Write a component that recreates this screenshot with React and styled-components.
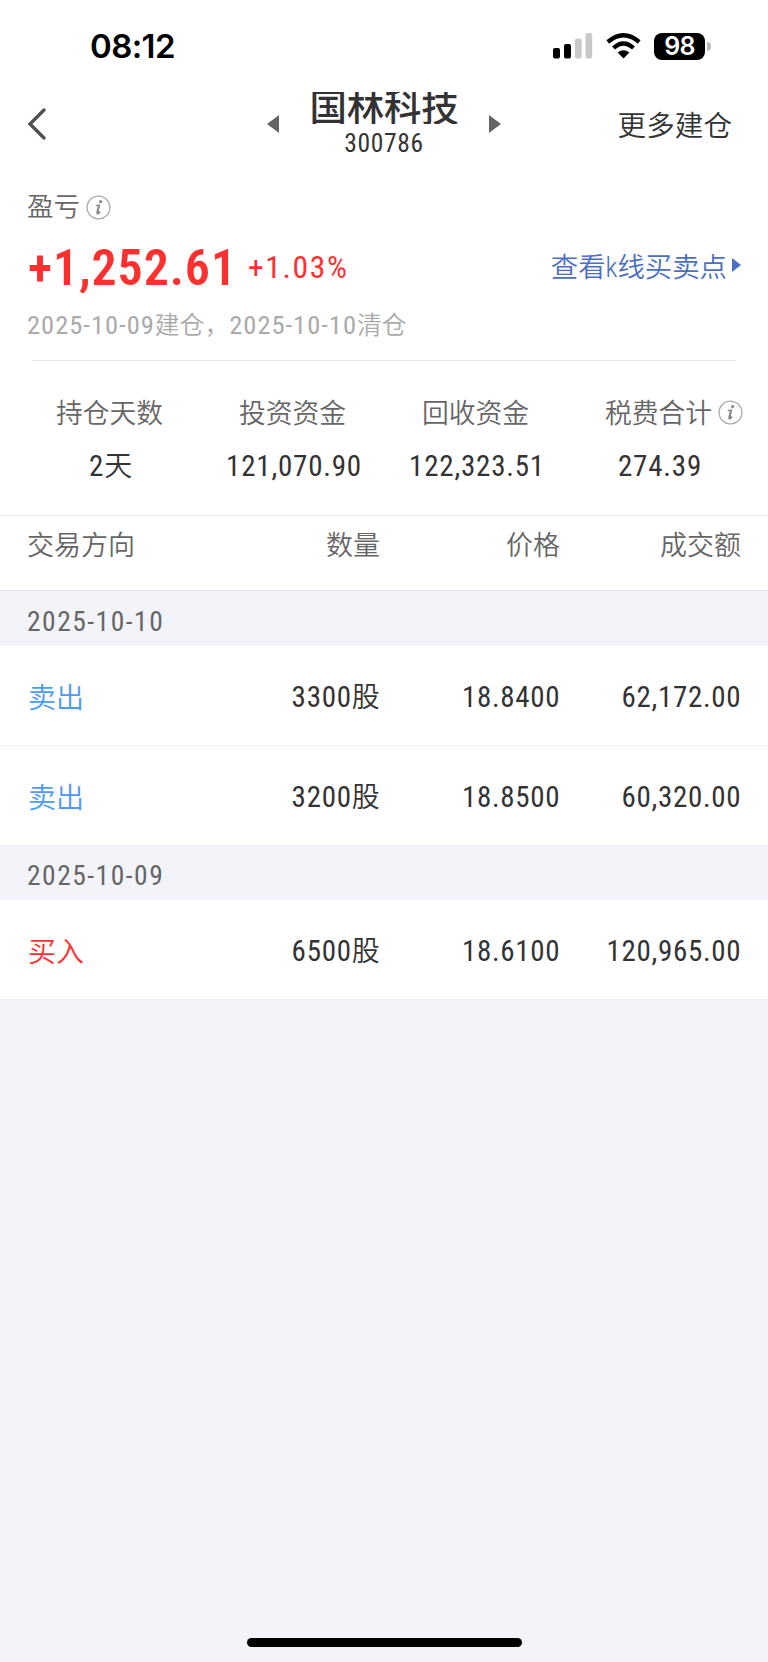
import React from 'react';
import styled, { createGlobalStyle } from 'styled-components';

const GlobalStyle = createGlobalStyle`
  * { box-sizing: border-box; }
  body {
    margin: 0;
    background: #f3f4f9;
    color: #333;
    font-family: "Roboto Condensed", "Noto Sans CJK SC", sans-serif;
    font-weight: 350;
  }
`;

const Screen = styled.main`
  display: flex;
  flex-direction: column;
  width: 768px;
  height: 1662px;
  background: #f3f4f9;
  overflow: hidden;
`;

const StatusBar = styled.header`
  display: flex;
  align-items: center;
  justify-content: space-between;
  height: 92px;
  padding: 0 57px 0 90px;
  background: #fff;
`;

const Clock = styled.time`
  font: 600 33px/40px Inter, sans-serif;
  letter-spacing: -0.6px;
  color: #000;
`;

const StatusIcons = styled.div`
  display: flex;
  align-items: center;
  gap: 13px;
`;

const Battery = styled.div`
  display: flex;
  align-items: center;
  gap: 2px;
`;

const BatteryBody = styled.span`
  width: 51px;
  height: 27px;
  border-radius: 8px;
  background: #000;
  color: #fff;
  font: 600 25px/27px Inter, sans-serif;
  letter-spacing: -0.8px;
  text-align: center;
`;

const BatteryTip = styled.span`
  width: 4px;
  height: 9px;
  border-radius: 0 5px 5px 0;
  background: #bbb;
`;

const NavBar = styled.nav`
  display: grid;
  grid-template-columns: 240px 1fr 240px;
  height: 88px;
  background: #fff;
`;

const BackIcon = styled.svg`
  display: block;
  margin: 15px 0 0 26px;
`;

const StockSwitcher = styled.div`
  display: flex;
  justify-content: space-between;
  padding: 0 27px;
`;

const Arrow = styled.svg`
  display: block;
  flex: none;
  margin-top: ${p => p.$top || 0}px;
  fill: ${p => p.$color};
`;

const Stock = styled.div`
  text-align: center;
`;

const StockName = styled.h1`
  height: 32px;
  margin: 0;
  overflow: hidden;
  font-size: 37.5px;
  line-height: 32px;
  font-weight: 500;
  letter-spacing: -0.2px;
  white-space: nowrap;
`;

const StockCode = styled.div`
  font-size: 25.5px;
  font-weight: 375;
  line-height: 39px;
  letter-spacing: 0.7px;
`;

const NavAction = styled.a`
  justify-self: end;
  margin-right: 36px;
  font-size: 28.6px;
  line-height: 69px;
`;

const Summary = styled.section`
  display: flex;
  flex-direction: column;
  height: 336px;
  background: #fff;
  border-bottom: 1px solid #ededf0;
`;

const ProfitLabel = styled.div`
  display: flex;
  align-items: center;
  gap: 6px;
  height: 54px;
  padding-left: 27px;
  font-size: 26.5px;
  line-height: 60px;
  color: #666;
`;

const ProfitRow = styled.div`
  display: flex;
  height: 66px;
  line-height: 68px;
  padding: 0 27px;
  color: #fd3030;
`;

const Profit = styled.strong`
  width: 208px;
  padding-left: 1px;
  font-size: 50px;
  font-weight: 600;
  letter-spacing: 0.9px;
`;

const Percent = styled.span`
  margin-left: 13px;
  font-size: 31.5px;
  font-weight: 375;
  letter-spacing: 1.7px;
`;

const ChartLink = styled.a`
  display: flex;
  gap: 5px;
  margin-left: auto;
  font-size: 27.4px;
  line-height: 69px;
  color: #4c6fc1;
`;

const Period = styled.div`
  height: 60px;
  padding-left: 27px;
  font-size: 24.8px;
  line-height: 49px;
  color: #aaa;
`;

const PeriodDate = styled.time`
  font-size: 26.5px;
  font-weight: 375;
  letter-spacing: 1px;
`;

const Divider = styled.hr`
  width: 704px;
  height: 1px;
  margin: 0 auto;
  border: 0;
  background: #e4e5f1;
`;

const Stats = styled.dl`
  display: grid;
  grid-template-columns: repeat(4, 183px);
  margin: 0;
  padding: 26px 0 0 18px;
`;

const Stat = styled.div`
  text-align: center;
`;

const StatLabel = styled.dt`
  position: relative;
  font-size: 26.8px;
  line-height: 54px;
  color: #666;
`;

const StatInfo = styled.span`
  position: absolute;
  top: 13px;
  left: 151px;
  display: flex;
`;

const StatValue = styled.dd`
  margin: 0;
  padding-left: 3px;
  font-size: 29px;
  font-weight: 375;
  line-height: 51px;
  letter-spacing: 0.8px;
`;

const rowGrid = `
  display: grid;
  grid-template-columns: 181px 172px 180px 181px;
  padding-left: 27px;
  text-align: right;
`;

const TableHead = styled.div`
  ${rowGrid}
  height: 75px;
  background: #fff;
  border-bottom: 1px solid #e2e3ea;
  font-size: 27px;
  line-height: 61px;
  color: #666;
  > :first-child { text-align: left; }
`;

const DateHeading = styled.h2`
  height: ${p => p.$height}px;
  margin: 0;
  padding-left: 27px;
  font-size: 27.5px;
  font-weight: 375;
  line-height: ${p => p.$line}px;
  letter-spacing: 1.5px;
  color: #666;
`;

const TradeRow = styled.div`
  ${rowGrid}
  height: 100px;
  background: #fff;
  border-bottom: 1px solid #f0f1f7;
  font-size: 29px;
  line-height: 103px;
`;

const Side = styled.span`
  padding-left: 1px;
  font-size: 28px;
  line-height: 105px;
  text-align: left;
  color: ${p => (p.$buy ? '#fd3030' : '#4b9bff')};
`;

const Figure = styled.span`
  font-weight: 375;
  letter-spacing: 0.7px;
  margin-right: -0.4px;
`;

const Unit = styled.span`
  font-size: 28px;
  font-weight: 350;
`;

const HomeIndicator = styled.div`
  width: 275px;
  height: 9px;
  margin: auto auto 15px;
  border-radius: 5px;
  background: #000;
`;

const Info = () => (
  <svg width="25" height="25" viewBox="0 0 25 25">
    <circle cx="12.5" cy="12.5" r="11.4" fill="none" stroke="#aaa" strokeWidth="1.3" />
    <circle cx="14.6" cy="6.6" r="1.6" fill="#888" />
    <path d="M9.8 10.6L13.4 10L11.6 17.3" fill="none" stroke="#888" strokeWidth="1.2" />
    <path d="M13 10.5L11.3 17.2Q11 18.8 12.2 18.3L14 16.8" fill="none" stroke="#888" strokeWidth="2" />
  </svg>
);

const Signal = () => (
  <svg width="40" height="26" viewBox="0 0 40 26">
    <rect x="0" y="15" width="7" height="10.5" rx="2" />
    <rect x="11" y="11" width="7" height="14.5" rx="2" />
    <rect x="22" y="5.5" width="6.7" height="20" rx="2" fill="#c9c9c9" />
    <rect x="32.5" y="0" width="6.7" height="25.5" rx="2" fill="#c9c9c9" />
  </svg>
);

const Wifi = () => (
  <svg width="35" height="26" viewBox="0 0 35 26">
    <path d="M1.8 9Q17.5-4.5 33.2 9M7.5 15Q17.5 6 27.5 15" fill="none" stroke="#000" strokeWidth="4.3" />
    <path d="M11.6 19.4Q17.5 14.9 23.4 19.4L17.5 25.5Z" />
  </svg>
);

const stats = [
  { label: '持仓天数', value: '2', unit: '天' },
  { label: '投资资金', value: '121,070.90' },
  { label: '回收资金', value: '122,323.51' },
  { label: '税费合计', value: '274.39', info: true },
];

const days = [
  {
    date: '2025-10-10', height: 55, line: 61,
    trades: [
      { side: '卖出', qty: '3300', price: '18.8400', amount: '62,172.00' },
      { side: '卖出', qty: '3200', price: '18.8500', amount: '60,320.00' },
    ],
  },
  {
    date: '2025-10-09', height: 54, line: 60,
    trades: [{ side: '买入', buy: true, qty: '6500', price: '18.6100', amount: '120,965.00' }],
  },
];

export default function App() {
  return (
    <Screen>
      <GlobalStyle />
      <StatusBar>
        <Clock>08:12</Clock>
        <StatusIcons>
          <Signal />
          <Wifi />
          <Battery>
            <BatteryBody>98</BatteryBody>
            <BatteryTip />
          </Battery>
        </StatusIcons>
      </StatusBar>
      <NavBar>
        <BackIcon width="24" height="34" viewBox="0 0 24 34">
          <path d="M18 3L4 17L18 31" fill="none" stroke="#505050" strokeWidth="3.4" strokeLinecap="round" />
        </BackIcon>
        <StockSwitcher>
          <Arrow $top={23} $color="#666" width="12" height="18" viewBox="0 0 12 18"><path d="M12 0V18L0 9Z" /></Arrow>
          <Stock>
            <StockName>国林科技</StockName>
            <StockCode>300786</StockCode>
          </Stock>
          <Arrow $top={23} $color="#666" width="12" height="18" viewBox="0 0 12 18"><path d="M0 0V18L12 9Z" /></Arrow>
        </StockSwitcher>
        <NavAction>更多建仓</NavAction>
      </NavBar>
      <Summary>
        <ProfitLabel>盈亏<Info /></ProfitLabel>
        <ProfitRow>
          <Profit>+1,252.61</Profit>
          <Percent>+1.03%</Percent>
          <ChartLink>
            查看k线买卖点
            <Arrow $top={24} $color="#4c6fc1" width="9" height="14" viewBox="0 0 9 14"><path d="M0 0V14L9 7Z" /></Arrow>
          </ChartLink>
        </ProfitRow>
        <Period>
          <PeriodDate>2025-10-09</PeriodDate>建仓，<PeriodDate>2025-10-10</PeriodDate>清仓
        </Period>
        <Divider />
        <Stats>
          {stats.map(s => (
            <Stat key={s.label}>
              <StatLabel>{s.label}{s.info && <StatInfo><Info /></StatInfo>}</StatLabel>
              <StatValue>{s.value}{s.unit && <Unit>{s.unit}</Unit>}</StatValue>
            </Stat>
          ))}
        </Stats>
      </Summary>
      <TableHead>
        <span>交易方向</span>
        <span>数量</span>
        <span>价格</span>
        <span>成交额</span>
      </TableHead>
      {days.map(day => (
        <section key={day.date}>
          <DateHeading $height={day.height} $line={day.line}>{day.date}</DateHeading>
          {day.trades.map(t => (
            <TradeRow key={t.price}>
              <Side $buy={t.buy}>{t.side}</Side>
              <Figure>{t.qty}<Unit>股</Unit></Figure>
              <Figure>{t.price}</Figure>
              <Figure>{t.amount}</Figure>
            </TradeRow>
          ))}
        </section>
      ))}
      <HomeIndicator />
    </Screen>
  );
}
